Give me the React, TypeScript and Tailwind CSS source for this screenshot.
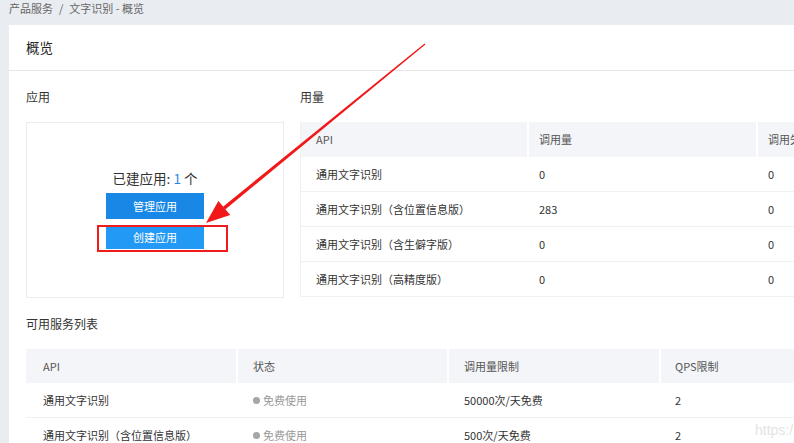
const usage = [
  { api: "通用文字识别", calls: "0", failed: "0" },
  { api: "通用文字识别（含位置信息版）", calls: "283", failed: "0" },
  { api: "通用文字识别（含生僻字版）", calls: "0", failed: "0" },
  { api: "通用文字识别（高精度版）", calls: "0", failed: "0" },
];

const services = [
  { api: "通用文字识别", limit: "50000次/天免费", qps: "2" },
  { api: "通用文字识别（含位置信息版）", limit: "500次/天免费", qps: "2" },
];

function Arrow() {
  return (
    <svg className="pointer-events-none absolute left-0 top-0" width="794" height="443" viewBox="0 0 794 443">
      <polygon points="425.4,44.5 424.6,43.5 223.0,206.7 225.2,209.5" fill="#f01818" />
      <polygon points="206,223 230.2,214.9 218.4,200.9" fill="#f01818" />
    </svg>
  );
}

export default function App() {
  return (
    <div
      className="relative h-[443px] w-[794px] overflow-hidden bg-[#e9ecf1] text-[#333]"
      style={{ fontFamily: '"Noto Sans CJK SC", "Noto Sans", sans-serif' }}
    >
      <div className="h-[25px] pl-[9px] text-[11px] leading-[16px] text-[#666]">
        产品服务<span className="mx-[6px]">/</span>文字识别 - 概览
      </div>

      <div className="ml-[9px] w-[820px] bg-white">
        <div className="flex h-[46px] items-center border-b border-[#e6e6e6] pl-[17px] text-[13.5px] text-[#222]">概览</div>

        <div className="pl-[17px]">
          <div className="flex gap-[16px]">
            <div className="w-[258px]">
              <div className="flex h-[51px] items-center text-[12px] text-[#333]">应用</div>
              <div className="relative flex h-[176px] flex-col items-center border border-[#ececec] pt-[45px]">
                <div className="text-[13.5px] leading-[20px] text-[#333]">
                  已建应用: <span className="text-[#1e88e5]">1</span> 个
                </div>
                <button className="mt-[5px] h-[26px] w-[98px] bg-[#1987e6] text-[11px] text-white">管理应用</button>
                <button className="mt-[6px] h-[24px] w-[98px] bg-[#2299f5] text-[11px] text-white">创建应用</button>
                <div className="absolute left-[70px] top-[102px] h-[27px] w-[131px] border-2 border-[#ee1c1c]" />
              </div>
            </div>

            <div className="flex-1">
              <div className="flex h-[51px] items-center text-[12px] text-[#333]">用量</div>
              <div className="border-l border-[#f0f0f0] text-[11px]">
                <div className="flex h-[35px] items-center bg-[#f4f5f9] text-[#555]">
                  <div className="w-[228px] border-r-2 border-white pl-[15px] leading-[35px]">API</div>
                  <div className="w-[229px] border-r-2 border-white pl-[10px] leading-[35px]">调用量</div>
                  <div className="pl-[10px]">调用失败</div>
                </div>
                {usage.map((r) => (
                  <div key={r.api} className="flex h-[35px] items-center border-b border-[#f0f1f4]">
                    <div className="w-[228px] pl-[15px]">{r.api}</div>
                    <div className="w-[229px] pl-[10px]">{r.calls}</div>
                    <div className="pl-[10px]">{r.failed}</div>
                  </div>
                ))}
              </div>
            </div>
          </div>

          <div className="flex h-[51px] items-center text-[12px] text-[#333]">可用服务列表</div>
          <div className="text-[11px]">
            <div className="flex h-[34px] items-center bg-[#f4f5f9] text-[#555]">
              <div className="w-[212px] border-r-2 border-white pl-[17px] leading-[34px]">API</div>
              <div className="w-[211px] border-r-2 border-white pl-[15px] leading-[34px]">状态</div>
              <div className="w-[212px] border-r-2 border-white pl-[15px] leading-[34px]">调用量限制</div>
              <div className="pl-[14px]">QPS限制</div>
            </div>
            {services.map((r) => (
              <div key={r.api} className="flex h-[35px] items-center border-b border-[#eef0f4]">
                <div className="w-[212px] pl-[17px]">{r.api}</div>
                <div className="flex w-[211px] items-center gap-[3px] pl-[15px] text-[#999]">
                  <span className="inline-block h-[7px] w-[7px] rounded-full bg-[#a6a6a6]" />
                  免费使用
                </div>
                <div className="w-[212px] pl-[15px]">{r.limit}</div>
                <div className="pl-[14px]">{r.qps}</div>
              </div>
            ))}
          </div>
        </div>
      </div>

      <div className="absolute left-[755px] top-[420px] text-[14px] text-[#e4e4e4]" style={{ fontFamily: '"Liberation Sans", sans-serif' }}>
        https:/
      </div>
      <Arrow />
    </div>
  );
}
